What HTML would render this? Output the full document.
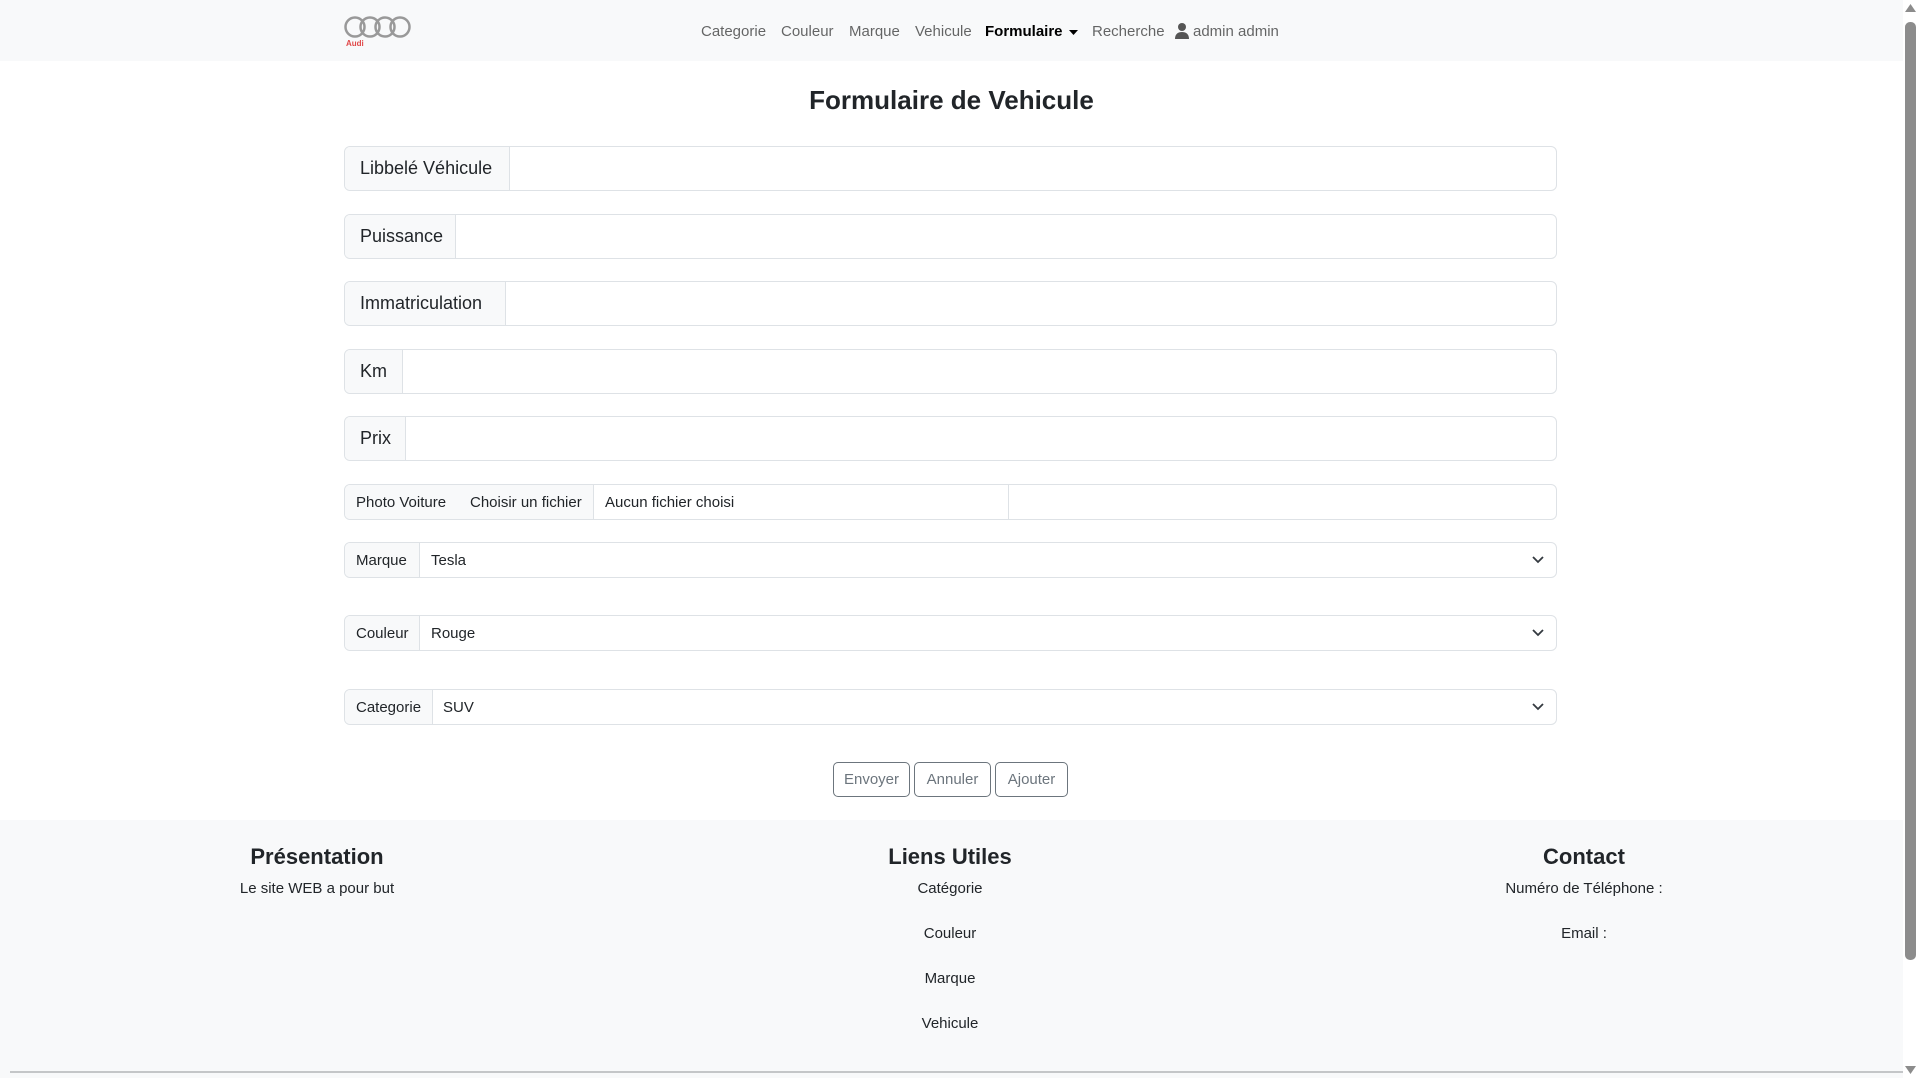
<!DOCTYPE html>
<html><head><meta charset="utf-8"><style>
*{box-sizing:border-box;margin:0;padding:0}
body{width:1918px;height:1078px;overflow:hidden;position:relative;background:#fff;font-family:"Liberation Sans",sans-serif;color:#212529}
.a{position:absolute;white-space:nowrap}
.nav{position:absolute;left:0;top:0;width:1903px;height:61px;background:#f8f9fa}
.ni{position:absolute;top:23px;font-size:15px;color:rgba(0,0,0,.6)}
.grp{position:absolute;left:344px;width:1213px;border:1px solid #dee2e6;border-radius:6px;background:#fff;overflow:hidden}
.lbl{position:absolute;left:0;top:0;bottom:0;background:#f8f9fa;border-right:1px solid #dee2e6;display:flex;align-items:center;padding-left:14px}
.lg .lbl{font-size:18px;padding-left:15px}
.sm{font-size:15px}
.val{position:absolute;top:0;bottom:0;display:flex;align-items:center;font-size:15px}
.chev{position:absolute;right:12px;top:50%;margin-top:-5px}
.btn{position:absolute;top:762px;height:35px;border:1px solid #6c757d;border-radius:5px;color:#6c757d;font-size:15px;display:flex;align-items:center;justify-content:center}
.foot{position:absolute;left:0;top:820px;width:1903px;height:258px;background:#f8f9fa}
.fc{position:absolute;width:400px;text-align:center;font-size:15px}
.fh{position:absolute;width:400px;text-align:center;font-size:22px;font-weight:bold}
</style></head><body>
<div class="nav">
<svg class="a" style="left:343px;top:15px" width="70" height="26" viewBox="0 0 70 26"><g fill="none" stroke="#999" stroke-width="2.5"><circle cx="12" cy="12" r="9.5"/><circle cx="27" cy="12" r="9.5"/><circle cx="42" cy="12" r="9.5"/><circle cx="57" cy="12" r="9.5"/></g></svg>
<div class="a" style="left:346px;top:39px;font-size:8px;font-weight:bold;color:#e04848">Audi</div>
<span class="ni" style="left:701px">Categorie</span>
<span class="ni" style="left:781px">Couleur</span>
<span class="ni" style="left:849px">Marque</span>
<span class="ni" style="left:915px">Vehicule</span>
<span class="ni" style="left:985px;color:#000;font-weight:bold">Formulaire</span>
<svg class="a" style="left:1069px;top:30px" width="9" height="5"><path d="M0 0h9L4.5 5z" fill="#000"/></svg>
<span class="ni" style="left:1092px">Recherche</span>
<svg class="a" style="left:1175px;top:23px" width="14" height="16" viewBox="0 0 14 16"><circle cx="7" cy="4" r="4" fill="#555"/><path d="M0 16c0-5 3-7 7-7s7 2 7 7z" fill="#555"/></svg>
<span class="ni" style="left:1193px">admin admin</span>
</div>
<div class="a" style="left:0;width:1903px;top:85px;text-align:center;font-size:26px;font-weight:bold;color:#212529">Formulaire de Vehicule</div>

<div class="grp lg" style="top:146px;height:45px"><div class="lbl" style="width:165px">Libbelé Véhicule</div></div>
<div class="grp lg" style="top:214px;height:45px"><div class="lbl" style="width:111px">Puissance</div></div>
<div class="grp lg" style="top:281px;height:45px"><div class="lbl" style="width:161px">Immatriculation</div></div>
<div class="grp lg" style="top:349px;height:45px"><div class="lbl" style="width:58px">Km</div></div>
<div class="grp lg" style="top:416px;height:45px"><div class="lbl" style="width:61px">Prix</div></div>

<div class="grp" style="top:484px;height:36px">
<div class="lbl sm" style="width:115px;padding-left:11px">Photo Voiture</div>
<div class="lbl sm" style="left:114px;width:135px;padding-left:11px">Choisir un fichier</div>
<div class="val" style="left:260px">Aucun fichier choisi</div>
<div class="a" style="left:663px;top:0;bottom:0;border-left:1px solid #dee2e6"></div>
</div>

<div class="grp" style="top:542px;height:36px"><div class="lbl sm" style="width:75px;padding-left:11px">Marque</div><div class="val" style="left:86px">Tesla</div>
<svg class="chev" width="12" height="9" viewBox="0 0 12 9"><path d="M1 2l5 5 5-5" fill="none" stroke="#343a40" stroke-width="1.8"/></svg></div>
<div class="grp" style="top:615px;height:36px"><div class="lbl sm" style="width:75px;padding-left:11px">Couleur</div><div class="val" style="left:86px">Rouge</div>
<svg class="chev" width="12" height="9" viewBox="0 0 12 9"><path d="M1 2l5 5 5-5" fill="none" stroke="#343a40" stroke-width="1.8"/></svg></div>
<div class="grp" style="top:689px;height:36px"><div class="lbl sm" style="width:88px;padding-left:11px">Categorie</div><div class="val" style="left:98px">SUV</div>
<svg class="chev" width="12" height="9" viewBox="0 0 12 9"><path d="M1 2l5 5 5-5" fill="none" stroke="#343a40" stroke-width="1.8"/></svg></div>

<div class="btn" style="left:833px;width:77px">Envoyer</div>
<div class="btn" style="left:914px;width:77px">Annuler</div>
<div class="btn" style="left:995px;width:73px">Ajouter</div>

<div class="foot">
<div class="fh" style="left:117px;top:24px">Présentation</div>
<div class="fc" style="left:117px;top:60px">Le site WEB a pour but</div>
<div class="fh" style="left:750px;top:24px">Liens Utiles</div>
<div class="fc" style="left:750px;top:60px">Catégorie</div>
<div class="fc" style="left:750px;top:105px">Couleur</div>
<div class="fc" style="left:750px;top:150px">Marque</div>
<div class="fc" style="left:750px;top:195px">Vehicule</div>
<div class="fh" style="left:1384px;top:24px">Contact</div>
<div class="fc" style="left:1384px;top:60px">Numéro de Téléphone :</div>
<div class="fc" style="left:1384px;top:105px">Email :</div>
<div class="a" style="left:10px;top:251px;width:1893px;height:2px;background:#c4c6c8"></div>
</div>

<div class="a" style="left:1903px;top:0;width:15px;height:1078px;background:#fff"></div>
<svg class="a" style="left:1905px;top:4px" width="11" height="8"><path d="M0 8L5.5 0 11 8z" fill="#8c8c8c"/></svg>
<div class="a" style="left:1905px;top:22px;width:11px;height:938px;background:#8c8c8c;border-radius:5px"></div>
<svg class="a" style="left:1905px;top:1066px" width="11" height="8"><path d="M0 0h11L5.5 8z" fill="#8c8c8c"/></svg>
</body></html>
